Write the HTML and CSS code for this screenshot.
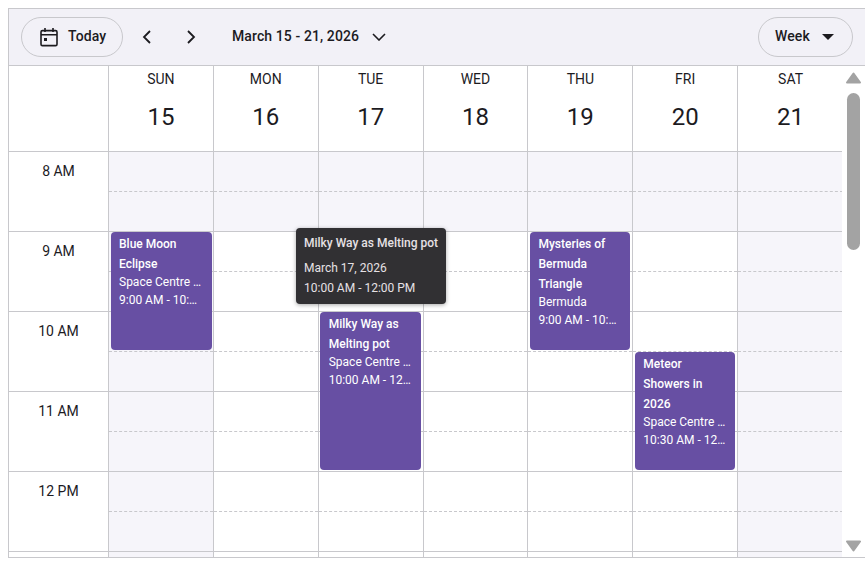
FILE: index.html
```html
<!DOCTYPE html>
<html lang="en">

<head>
    <meta charset="UTF-8">
    <title>Scheduler</title>
    <link rel="stylesheet" href="styles.css">
</head>

<body>

    <div class="scheduler">
        <div class="toolbar">
            <button class="pill today">
                <svg class="today__icon" width="20" height="20" viewBox="0 0 20 20" fill="none" stroke="#1c1b1f" stroke-width="1.6">
                    <rect x="2" y="3.6" width="16" height="15" rx="1.4" />
                    <path d="M2 7.8h16M6 1v4M14 1v4" />
                    <rect x="5" y="11" width="3" height="3" fill="#1c1b1f" stroke="none" />
                </svg>
                <span class="toolbar__text">Today</span>
            </button>
            <button class="nav-btn">
                <svg width="10" height="14" viewBox="0 0 10 14" fill="none" stroke="#1c1b1f" stroke-width="1.8">
                    <path d="M8 1 2 7l6 6" />
                </svg>
            </button>
            <button class="nav-btn">
                <svg width="10" height="14" viewBox="0 0 10 14" fill="none" stroke="#1c1b1f" stroke-width="1.8">
                    <path d="m2 1 6 6-6 6" />
                </svg>
            </button>
            <div class="range">
                <span class="toolbar__text">March 15 - 21, 2026</span>
                <svg width="14" height="8" viewBox="0 0 14 8" fill="none" stroke="#1c1b1f" stroke-width="1.6">
                    <path d="m1 1 6 6 6-6" />
                </svg>
            </div>
            <button class="pill view">
                <span class="toolbar__text">Week</span>
                <svg width="12" height="6" viewBox="0 0 12 6">
                    <path d="M0 0h12L6 6z" fill="#1c1b1f" />
                </svg>
            </button>
        </div>

        <div class="main">
            <div class="calendar">
                <div class="head">
                    <div class="head__cell"></div>
                    <div class="head__cell"><span class="head__day">SUN</span><span class="head__date">15</span></div>
                    <div class="head__cell"><span class="head__day">MON</span><span class="head__date">16</span></div>
                    <div class="head__cell"><span class="head__day">TUE</span><span class="head__date">17</span></div>
                    <div class="head__cell"><span class="head__day">WED</span><span class="head__date">18</span></div>
                    <div class="head__cell"><span class="head__day">THU</span><span class="head__date">19</span></div>
                    <div class="head__cell"><span class="head__day">FRI</span><span class="head__date">20</span></div>
                    <div class="head__cell"><span class="head__day">SAT</span><span class="head__date">21</span></div>
                </div>

                <div class="hours">
                    <div class="time">8 AM</div>
                    <div class="slot slot--off"></div>
                    <div class="slot slot--off"></div>
                    <div class="slot slot--off"></div>
                    <div class="slot slot--off"></div>
                    <div class="slot slot--off"></div>
                    <div class="slot slot--off"></div>
                    <div class="slot slot--off"></div>

                    <div class="time">9 AM</div>
                    <div class="slot slot--off">
                        <div class="event event--90">
                            <div class="event__title">Blue Moon Eclipse</div>
                            <div class="event__line">Space Centre USA</div>
                            <div class="event__line">9:00 AM - 10:30 AM</div>
                        </div>
                    </div>
                    <div class="slot"></div>
                    <div class="slot"></div>
                    <div class="slot"></div>
                    <div class="slot">
                        <div class="event event--90">
                            <div class="event__title">Mysteries of Bermuda Triangle</div>
                            <div class="event__line">Bermuda</div>
                            <div class="event__line">9:00 AM - 10:30 AM</div>
                        </div>
                    </div>
                    <div class="slot"></div>
                    <div class="slot slot--off"></div>

                    <div class="time">10 AM</div>
                    <div class="slot slot--off"></div>
                    <div class="slot"></div>
                    <div class="slot">
                        <div class="event event--120">
                            <div class="event__title">Milky Way as Melting pot</div>
                            <div class="event__line">Space Centre USA</div>
                            <div class="event__line">10:00 AM - 12:00 PM</div>
                        </div>
                    </div>
                    <div class="slot"></div>
                    <div class="slot"></div>
                    <div class="slot">
                        <div class="event event--90 event--half">
                            <div class="event__title">Meteor Showers in 2026</div>
                            <div class="event__line">Space Centre USA</div>
                            <div class="event__line">10:30 AM - 12:00 PM</div>
                        </div>
                    </div>
                    <div class="slot slot--off"></div>

                    <div class="time">11 AM</div>
                    <div class="slot slot--off"></div>
                    <div class="slot"></div>
                    <div class="slot"></div>
                    <div class="slot"></div>
                    <div class="slot"></div>
                    <div class="slot"></div>
                    <div class="slot slot--off"></div>

                    <div class="time">12 PM</div>
                    <div class="slot slot--off"></div>
                    <div class="slot"></div>
                    <div class="slot"></div>
                    <div class="slot"></div>
                    <div class="slot"></div>
                    <div class="slot"></div>
                    <div class="slot slot--off"></div>

                    <div class="time"></div>
                    <div class="slot slot--off"></div>
                    <div class="slot"></div>
                    <div class="slot"></div>
                    <div class="slot"></div>
                    <div class="slot"></div>
                    <div class="slot"></div>
                    <div class="slot slot--off"></div>
                </div>
            </div>

            <div class="scrollbar">
                <svg width="15" height="12" viewBox="0 0 15 12">
                    <path d="M7.5 1.5 14 10.5H1z" fill="#a3a3a3" stroke="#a3a3a3" stroke-width="2" stroke-linejoin="round" />
                </svg>
                <div class="scrollbar__thumb"></div>
                <svg class="scrollbar__down" width="15" height="12" viewBox="0 0 15 12">
                    <path d="M7.5 10.5 14 1.5H1z" fill="#a3a3a3" stroke="#a3a3a3" stroke-width="2" stroke-linejoin="round" />
                </svg>
            </div>
        </div>

        <div class="tooltip">
            <div class="tooltip__title">Milky Way as Melting pot</div>
            <div>March 17, 2026</div>
            <div>10:00 AM - 12:00 PM</div>
        </div>
    </div>

</body>

</html>
```

FILE: styles.css
```css
body {
    margin: 0;
    font-family: Roboto, sans-serif;
    color: #1c1b1f;
    background: #fff;
}

button {
    font: inherit;
    letter-spacing: inherit;
    color: inherit;
    background: none;
    border: 0;
    padding: 0;
}

.scheduler {
    position: relative;
    box-sizing: border-box;
    width: 857px;
    height: 550px;
    margin: 8px 0 0 8px;
    border: 1px solid #c8c8cc;
    border-right: 0;
    overflow: hidden;
}

.toolbar {
    display: flex;
    align-items: center;
    box-sizing: border-box;
    height: 57px;
    padding: 0 12px;
    background: #f2f1f7;
    border-bottom: 1px solid #c8c8cc;
    font-size: 14px;
    font-weight: 500;
    letter-spacing: 0.1px;
}

.toolbar__text {
    margin-bottom: 2px;
}

.pill {
    display: flex;
    align-items: center;
    box-sizing: border-box;
    height: 40px;
    border: 1px solid #c8c8cc;
    border-radius: 20px;
}

.today {
    width: 102px;
    gap: 9px;
    padding-left: 17px;
}

.nav-btn {
    display: flex;
    align-items: center;
    justify-content: center;
    width: 44px;
    height: 40px;
}

.today+.nav-btn {
    margin-left: 2px;
}

.range {
    display: flex;
    align-items: center;
    gap: 13px;
    margin-left: 19px;
}

.view {
    width: 95px;
    gap: 12px;
    padding-left: 16px;
    margin-left: auto;
}

.main {
    display: flex;
}

.calendar {
    width: 834px;
}

.head,
.hours {
    display: grid;
    grid-template-columns: 100px repeat(7, 1fr);
}

.head__cell {
    display: flex;
    flex-direction: column;
    align-items: center;
    height: 85px;
    border-right: 1px solid #c8c8cc;
    border-bottom: 1px solid #c8c8cc;
}

.head__cell:last-child,
.slot:nth-child(8n) {
    border-right: 0;
}

.head__day {
    margin-top: 4px;
    font-size: 14px;
    line-height: 18px;
}

.head__date {
    margin-top: 13px;
    font-size: 24px;
    line-height: 32px;
}

.time {
    height: 80px;
    box-sizing: border-box;
    padding-top: 10px;
    border-right: 1px solid #c8c8cc;
    border-bottom: 1px solid #c8c8cc;
    font-size: 14px;
    line-height: 18px;
    text-align: center;
}

.slot {
    position: relative;
    box-sizing: border-box;
    height: 80px;
    border-right: 1px solid #c8c8cc;
    border-bottom: 1px solid #c8c8cc;
}

.slot::before {
    content: "";
    display: block;
    height: 39px;
    border-bottom: 1px dashed #c8c8cc;
}

.slot--off {
    background: #f6f5fa;
}

.event {
    position: absolute;
    top: 0;
    left: 1.5px;
    right: 1.8px;
    z-index: 1;
    box-sizing: border-box;
    padding: 2px 8px 2px 8.5px;
    background: #674fa3;
    border-radius: 4px;
    color: #fff;
    font-size: 12px;
    line-height: 18px;
}

.slot--off .event {
    right: 1px;
}

.event--90 {
    height: 118px;
}

.event--120 {
    height: 158px;
}

.event--half {
    top: 40px;
}

.event__title {
    margin-bottom: -1px;
    font-weight: 500;
    line-height: 20px;
}

.event__line {
    white-space: nowrap;
    overflow: hidden;
    text-overflow: ellipsis;
}

.scrollbar {
    position: relative;
    display: flex;
    flex: 1;
    flex-direction: column;
    align-items: center;
    height: 491px;
    margin-left: -1px;
    padding-top: 6px;
    box-sizing: border-box;
    background: #fff;
}

.scrollbar__thumb {
    width: 13px;
    height: 157px;
    margin-top: 9px;
    background: #a3a3a3;
    border-radius: 7px;
}

.scrollbar__down {
    margin-top: auto;
    margin-bottom: 5px;
}

.tooltip {
    position: absolute;
    top: 219px;
    left: 287px;
    z-index: 2;
    box-sizing: border-box;
    width: 150px;
    height: 76px;
    padding: 5px 8px;
    background: #313033;
    border-radius: 4px;
    box-shadow: 0 1px 4px rgb(0 0 0 / 35%);
    color: #e6e1e5;
    font-size: 12px;
    line-height: 20px;
}

.tooltip__title {
    margin-bottom: 5px;
    font-weight: 500;
}
```
